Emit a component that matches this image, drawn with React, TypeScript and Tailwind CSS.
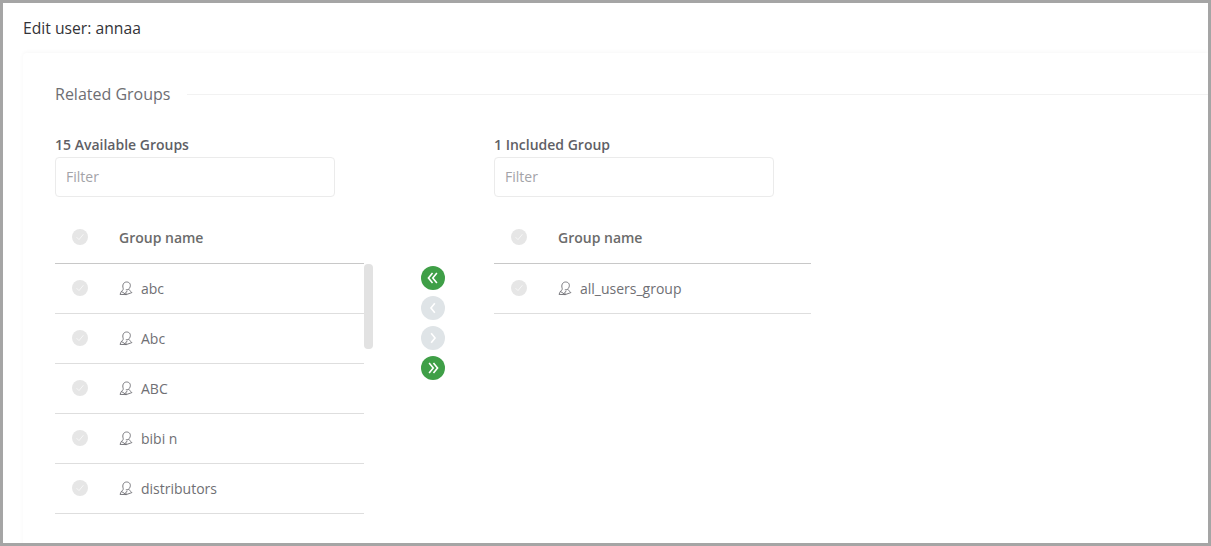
import React from "react";

function Check() {
  return (
    <span className="mb-[2px] flex h-4 w-4 items-center justify-center rounded-full bg-[#e6e6e6]">
      <svg width="10" height="10" viewBox="0 0 10 10" fill="none" stroke="#f7f7f7" strokeWidth="1">
        <path d="M1.6 5.2 L4 7.6 L8.4 2.2" />
      </svg>
    </span>
  );
}

function GroupIcon() {
  return (
    <svg width="14" height="15" viewBox="0 0 14 15" fill="none" stroke="#6c6c72" strokeWidth="0.9" className="shrink-0">
      <path d="M4.2 7.4 C3 4 4.6 1 7.6 1 C10.8 1 12 3.6 11 6.2 C10.4 8 8.6 9.2 6.8 8.8" />
      <path d="M4.2 7.4 C4.4 8.8 3.6 9.6 2.4 10.4 L1 13.4 L7.2 13.6 L12.9 11.6 C12.2 10.4 10.8 10 9.6 8.2" />
      <path d="M2.4 10.4 L7.2 13.6 L6.8 11.2 L8.4 10.2" />
    </svg>
  );
}

function Row({ name }: { name: string }) {
  return (
    <div className="flex h-[50px] items-center border-b border-[#dedede] pl-[17px]">
      <Check />
      <div className="ml-[31px] flex items-center gap-2">
        <GroupIcon />
        <span className="text-[14px] text-[#6f6f74]">{name}</span>
      </div>
    </div>
  );
}

function Head() {
  return (
    <div className="flex h-[50px] items-center border-b border-[#c8c8c8] pb-[2px] pl-[17px]">
      <Check />
      <span className="ml-[31px] text-[14px] font-semibold text-[#6b6b6b]">Group name</span>
    </div>
  );
}

function Filter() {
  return (
    <input
      placeholder="Filter"
      className="block h-10 w-[280px] rounded border border-[#ebebeb] bg-white pb-[2px] pl-[10px] pr-[10px] text-[14px] placeholder:text-[#a3a3a8] outline-none"
    />
  );
}

function Arrow({ active, d }: { active?: boolean; d: string }) {
  return (
    <span className={`flex h-6 w-6 items-center justify-center rounded-full ${active ? "bg-[#3f9f47]" : "bg-[#dfe4e7]"}`}>
      <svg width="16" height="16" viewBox="0 0 14 14" fill="none" stroke="#ffffff" strokeWidth="1.4">
        <path d={d} />
      </svg>
    </span>
  );
}

export default function App() {
  return (
    <div className="h-[546px] w-[1211px] overflow-hidden border-[3px] border-[#a5a5a5] bg-white font-['Open_Sans',sans-serif]">
      <div className="pl-5 pt-[14px]">
        <h1 className="text-[15.7px] leading-[22px] font-normal text-[#333338]">Edit user: annaa</h1>
        <div className="mt-[14px] h-[600px] rounded-tl pl-8 pt-[28px] shadow-[0_-1px_4px_rgba(0,0,0,0.035)]">
          <div className="flex items-center">
            <span className="text-[16px] leading-[26px] text-[#6e6e73]">Related Groups</span>
            <span className="ml-[17px] h-px flex-1 bg-[#f2f2f2]" />
          </div>
          <div className="mt-[27px] flex">
            <div className="w-[318px]">
              <div className="mb-[2px] text-[14px] leading-[21px] font-semibold text-[#5f5f66]">15 Available Groups</div>
              <Filter />
              <div className="mt-[17px] w-[309px]">
                <Head />
              </div>
              <div className="relative w-[318px]">
                <div className="w-[309px]">
                  <Row name="abc" />
                  <Row name="Abc" />
                  <Row name="ABC" />
                  <Row name="bibi n" />
                  <Row name="distributors" />
                </div>
                <div className="absolute right-0 top-0 h-[85px] w-[9px] rounded bg-[#e2e2e2]" />
              </div>
            </div>
            <div className="ml-[48px] mt-[132px] flex w-6 flex-col gap-[6px] self-start">
              <Arrow active d="M6.6 2.6 L3 7 L6.6 11.4 M10.4 2.6 L6.8 7 L10.4 11.4" />
              <Arrow d="M8.6 2.8 L5.2 7 L8.6 11.2" />
              <Arrow d="M5.4 2.8 L8.8 7 L5.4 11.2" />
              <Arrow active d="M3.6 2.6 L7.2 7 L3.6 11.4 M7.4 2.6 L11 7 L7.4 11.4" />
            </div>
            <div className="ml-[49px] w-[317px]">
              <div className="mb-[2px] text-[14px] leading-[21px] font-semibold text-[#5f5f66]">1 Included Group</div>
              <Filter />
              <div className="mt-[17px]">
                <Head />
                <Row name="all_users_group" />
              </div>
            </div>
          </div>
        </div>
      </div>
    </div>
  );
}
